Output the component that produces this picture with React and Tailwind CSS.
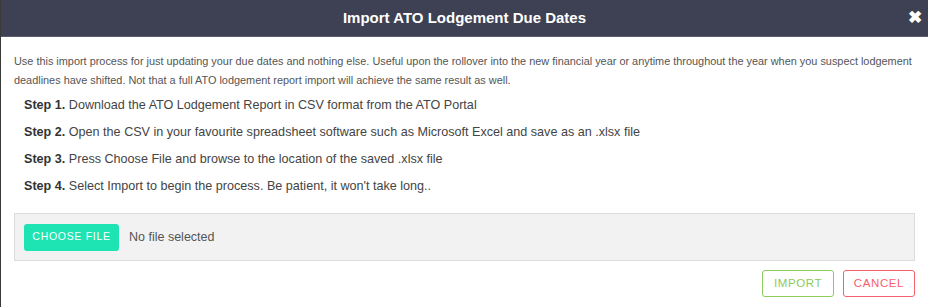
import React from "react";

const steps = [
  "Download the ATO Lodgement Report in CSV format from the ATO Portal",
  "Open the CSV in your favourite spreadsheet software such as Microsoft Excel and save as an .xlsx file",
  "Press Choose File and browse to the location of the saved .xlsx file",
  "Select Import to begin the process. Be patient, it won't take long..",
];

const App = () => {
  return (
    <div className="w-[928px] h-[307px] flex bg-white font-[family-name:'Liberation_Sans',Arial,sans-serif]">
      <div className="w-px bg-[#3a3a3a]" />
      <div className="flex-1 flex flex-col">
        <div className="h-[37px] bg-[#3d4153] border-b border-[#5a5e6c] flex items-center relative">
          <h2 className="w-full text-center text-white font-bold text-[15px]">
            Import ATO Lodgement Due Dates
          </h2>
          <span className="absolute right-[6px] top-[9px] text-white text-[17px] font-bold leading-none">
            ✖
          </span>
        </div>

        <div className="pl-[13px] pr-[12px] pt-[15px]">
          <p className="text-[10.9px] leading-[19px] text-[#555]">
            Use this import process for just updating your due dates and nothing else. Useful upon the
            rollover into the new financial year or anytime throughout the year when you suspect lodgement
            deadlines have shifted. Not that a full ATO lodgement report import will achieve the same result as well.
          </p>

          <ul className="pl-[10px] mt-[2px] text-[12.6px] text-[#444]">
            {steps.map((s, i) => (
              <li key={i} className="leading-[27px]">
                <strong className="text-[#333]">Step {i + 1}.</strong> {s}
              </li>
            ))}
          </ul>

          <div className="mt-[13px] w-[901px] h-[48px] bg-[#f2f2f2] border border-[#dcdcdc] flex items-center pl-[9px] gap-[10px]">
            <button className="h-[27px] w-[95px] rounded-[3px] bg-[#1ee3b2] text-white text-[10.5px] tracking-[0.7px] uppercase">
              Choose file
            </button>
            <span className="text-[12.5px] text-[#555]">No file selected</span>
          </div>

          <div className="flex justify-end gap-[9px] mt-[9px] w-[901px]">
            <button className="w-[72px] h-[27px] rounded-[3px] border border-[#8dcb5a] text-[#8dcb5a] text-[11.5px] tracking-[0.6px]">
              IMPORT
            </button>
            <button className="w-[72px] h-[27px] rounded-[3px] border border-[#f9606e] text-[#f9606e] text-[11.5px] tracking-[0.6px]">
              CANCEL
            </button>
          </div>
        </div>
      </div>
    </div>
  );
};

export default App;
